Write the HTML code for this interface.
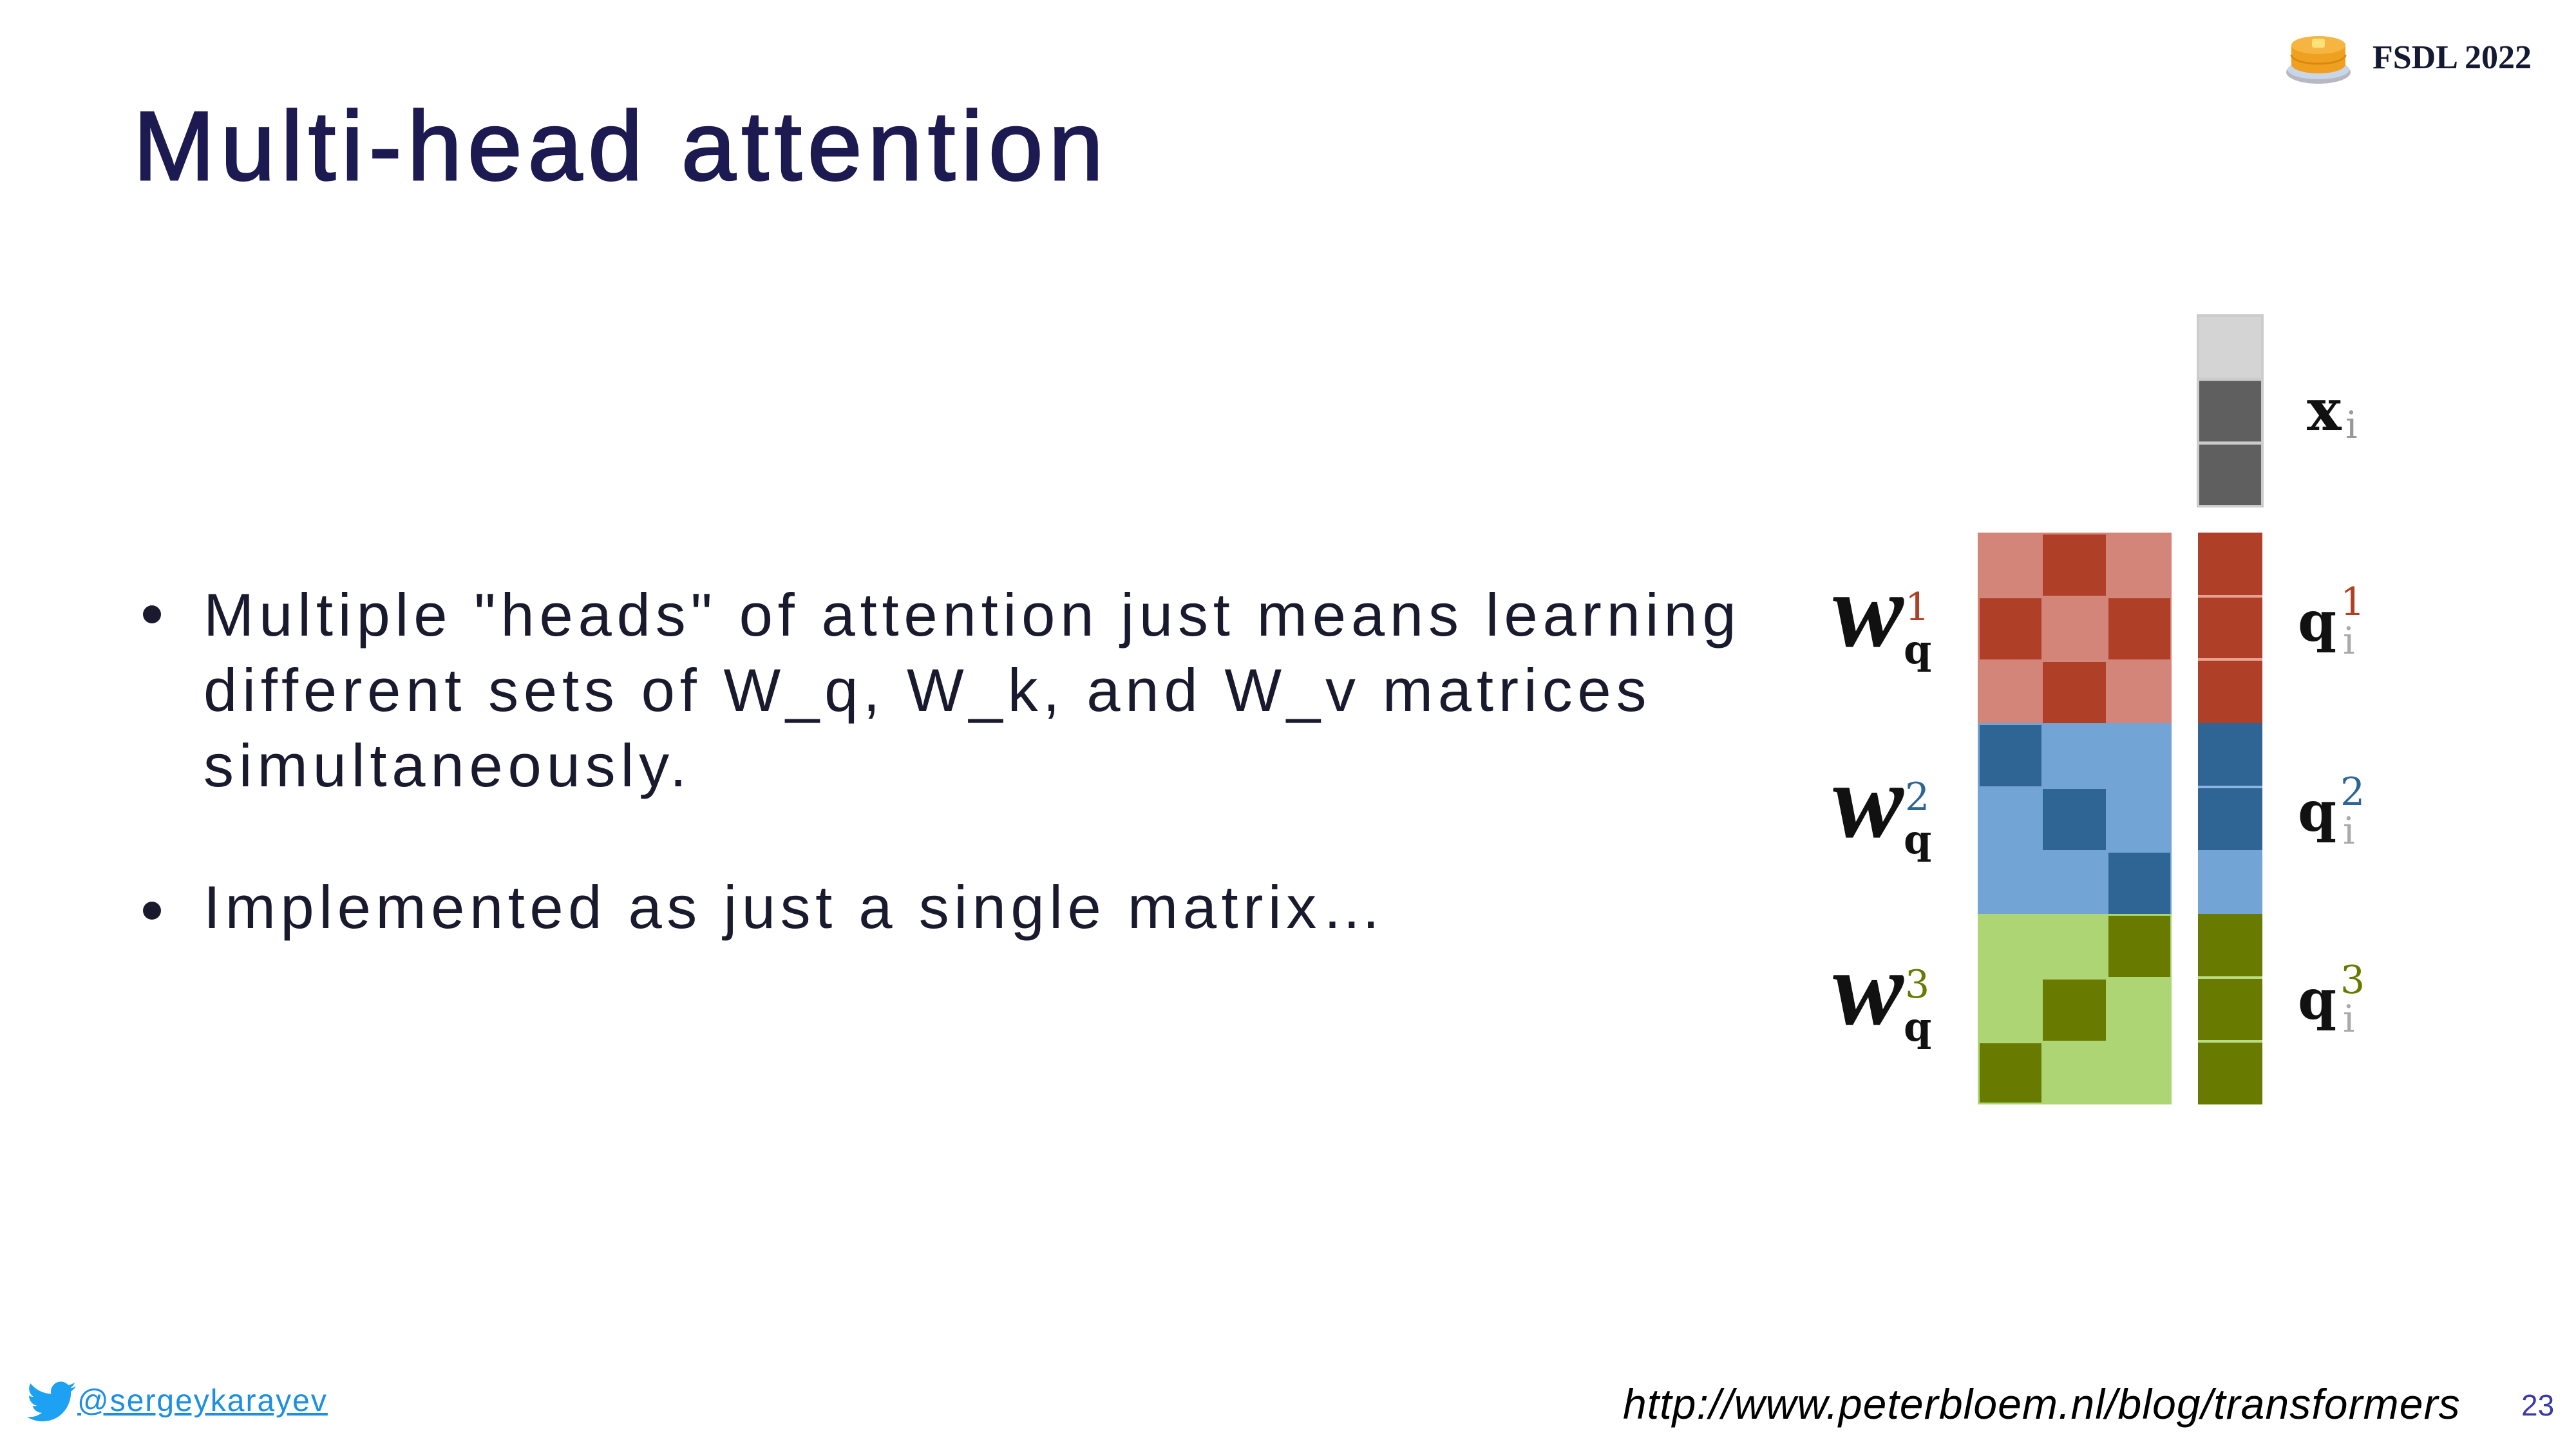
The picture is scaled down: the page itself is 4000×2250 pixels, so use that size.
<!DOCTYPE html>
<html><head><meta charset="utf-8"><style>
html,body{margin:0;padding:0;}
body{width:4000px;height:2250px;background:#fff;position:relative;overflow:hidden;font-family:"Liberation Sans",sans-serif;}
.t{position:absolute;white-space:nowrap;}
</style></head><body>
<div class="t" style="left:207px;top:140px;font-size:152px;color:#1c1a50;letter-spacing:9px;-webkit-text-stroke:3px #1c1a50;">Multi-head attention</div>

<div class="t" style="left:316px;top:896px;font-size:94px;line-height:117px;color:#1a1a2e;letter-spacing:7.8px;">Multiple "heads" of attention just means learning<br>different sets of W_q, W_k, and W_v matrices<br>simultaneously.</div>
<div style="position:absolute;left:222px;top:940px;width:28px;height:28px;border-radius:50%;background:#1a1a2e;"></div>
<div class="t" style="left:316px;top:1350px;font-size:94px;line-height:117px;color:#1a1a2e;letter-spacing:7.5px;">Implemented as just a single matrix…</div>
<div style="position:absolute;left:222px;top:1400px;width:28px;height:28px;border-radius:50%;background:#1a1a2e;"></div>

<!-- logo -->
<svg style="position:absolute;left:3545px;top:40px" width="110" height="100" viewBox="0 0 110 100">
<ellipse cx="55" cy="72" rx="50" ry="18" fill="#b8b8c0"/>
<ellipse cx="55" cy="68" rx="48" ry="15" fill="#c9d6ea"/>
<path d="M13 30 v30 a42 14 0 0 0 84 0 v-30z" fill="#f0a020"/>
<ellipse cx="55" cy="30" rx="42" ry="14" fill="#f5b540"/>
<path d="M13 45 a42 14 0 0 0 84 0" stroke="#d88a10" stroke-width="3" fill="none"/>
<rect x="45" y="20" width="20" height="14" rx="3" fill="#ffe27a"/>
</svg>
<div class="t" style="left:3684px;top:60px;font-size:52px;font-weight:bold;font-family:'Liberation Serif',serif;color:#141a33;">FSDL 2022</div>

<!-- diagram -->
<svg style="position:absolute;left:0;top:0" width="4000" height="2250">
<g>
<rect x="3413" y="490" width="100" height="99" fill="#d4d4d4"/>
<rect x="3413" y="589" width="100" height="99" fill="#5f5f5f"/>
<rect x="3413" y="688" width="100" height="98" fill="#5f5f5f"/>
<line x1="3413" y1="589" x2="3513" y2="589" stroke="#ccc" stroke-width="5"/>
<line x1="3413" y1="688" x2="3513" y2="688" stroke="#ccc" stroke-width="5"/>
<rect x="3413" y="490" width="100" height="296" fill="none" stroke="#ccc" stroke-width="4"/>
</g>
<g>
<rect x="3071" y="827" width="301" height="296" fill="#d4857a"/>
<rect x="3172" y="830" width="98" height="95" fill="#b03f27"/>
<rect x="3074" y="929" width="96" height="95" fill="#b03f27"/>
<rect x="3274" y="929" width="96" height="95" fill="#b03f27"/>
<rect x="3172" y="1028" width="98" height="95" fill="#b03f27"/>
<rect x="3071" y="1123" width="301" height="296" fill="#72a5d5"/>
<rect x="3074" y="1126" width="96" height="95" fill="#2e6595"/>
<rect x="3172" y="1225" width="98" height="95" fill="#2e6595"/>
<rect x="3274" y="1324" width="96" height="95" fill="#2e6595"/>
<rect x="3071" y="1419" width="301" height="296" fill="#add574"/>
<rect x="3274" y="1422" width="96" height="95" fill="#687a00"/>
<rect x="3172" y="1521" width="98" height="95" fill="#687a00"/>
<rect x="3074" y="1620" width="96" height="92" fill="#687a00"/>
</g>
<g>
<rect x="3413" y="827" width="100" height="296" fill="#b03f27"/>
<rect x="3413" y="1123" width="100" height="197" fill="#2e6595"/>
<rect x="3413" y="1320" width="100" height="99" fill="#72a5d5"/>
<rect x="3413" y="1419" width="100" height="296" fill="#687a00"/>
<g stroke="#e8a090" stroke-width="4"><line x1="3413" y1="926" x2="3513" y2="926"/><line x1="3413" y1="1024" x2="3513" y2="1024"/></g>
<g stroke="#8ab5e0" stroke-width="4"><line x1="3413" y1="1222" x2="3513" y2="1222"/></g>
<g stroke="#b8dc80" stroke-width="4"><line x1="3413" y1="1518" x2="3513" y2="1518"/><line x1="3413" y1="1617" x2="3513" y2="1617"/></g>
</g>
<g font-family="'DejaVu Serif','Liberation Serif',serif" font-weight="bold">
<text x="3582" y="668" font-size="90" fill="#111">x</text><text x="3642" y="680" font-size="58" fill="#999" font-weight="normal">i</text>
<g font-size="165" font-style="italic" fill="#111" font-family="'Liberation Serif',serif">
<text x="2846" y="1003">w</text><text x="2846" y="1299">w</text><text x="2846" y="1590">w</text>
</g>
<g font-size="60" font-weight="normal">
<text x="2958" y="963" fill="#b03f27">1</text><text x="2958" y="1258" fill="#2e6595">2</text><text x="2958" y="1549" fill="#687a00">3</text>
</g>
<g font-size="62" fill="#111">
<text x="2956" y="1030">q</text><text x="2956" y="1325">q</text><text x="2956" y="1616">q</text>
</g>
<g font-size="86" fill="#111">
<text x="3568" y="995">q</text><text x="3568" y="1290">q</text><text x="3568" y="1582">q</text>
</g>
<g font-size="60" font-weight="normal">
<text x="3634" y="955" fill="#b03f27">1</text><text x="3634" y="1250" fill="#2e6595">2</text><text x="3634" y="1542" fill="#687a00">3</text>
</g>
<g font-size="58" font-weight="normal" fill="#aaa">
<text x="3638" y="1015">i</text><text x="3638" y="1310">i</text><text x="3638" y="1602">i</text>
</g>
</g>
</svg>

<!-- footer -->
<svg style="position:absolute;left:42px;top:2145px" width="76" height="64" viewBox="0 0 24 20">
<path fill="#1da1f2" d="M24 2.4c-.9.4-1.8.7-2.8.8 1-.6 1.8-1.6 2.2-2.7-1 .6-2 1-3.1 1.2C19.3.7 18 0 16.6 0c-2.7 0-4.9 2.2-4.9 4.9 0 .4 0 .8.1 1.1C7.7 5.8 4.1 3.9 1.7.9c-.4.7-.7 1.6-.7 2.5 0 1.7.9 3.2 2.2 4.1-.8 0-1.6-.2-2.2-.6v.1c0 2.4 1.7 4.4 3.9 4.8-.4.1-.8.2-1.3.2-.3 0-.6 0-.9-.1.6 2 2.4 3.4 4.6 3.4-1.7 1.3-3.8 2.1-6.1 2.1-.4 0-.8 0-1.2-.1 2.2 1.4 4.8 2.2 7.5 2.2 9.1 0 14-7.5 14-14v-.6c1-.7 1.8-1.6 2.5-2.5z"/>
</svg>
<div class="t" style="left:120px;top:2148px;font-size:48px;color:#1d8fe0;text-decoration:underline;letter-spacing:2px;">@sergeykarayev</div>
<div class="t" style="left:2520px;top:2142px;font-size:66px;font-style:italic;color:#000;letter-spacing:1.1px;">http://www.peterbloem.nl/blog/transformers</div>
<div class="t" style="left:3915px;top:2155px;font-size:46px;color:#3a3aa8;">23</div>
</body></html>
